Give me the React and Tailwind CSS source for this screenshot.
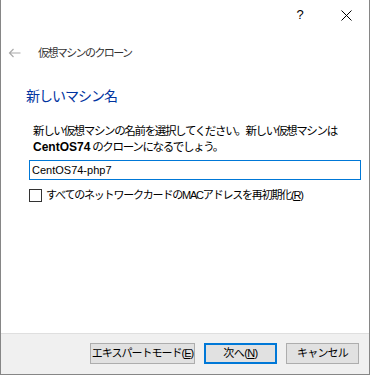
export default function App() {
  const font = { fontFamily: '"Liberation Sans","Noto Sans CJK JP",sans-serif' };
  return (
    <div
      className="w-[370px] h-[375px] bg-white border-l border-r border-b border-[#868686] flex flex-col text-black"
      style={font}
    >
      <div className="h-[30px] flex justify-end shrink-0">
        <div className="w-[46px] h-[30px] flex items-center justify-center text-[13px] text-black">?</div>
        <div className="w-[46px] h-[30px] flex items-center justify-center">
          <svg width="11" height="11" viewBox="0 0 11 11">
            <path d="M0.5 0.5 L10.5 10.5 M10.5 0.5 L0.5 10.5" stroke="#000" strokeWidth="1" />
          </svg>
        </div>
      </div>
      <div className="h-[30px] mt-[8px] flex items-center shrink-0">
        <div className="w-[37px] flex justify-center pr-[11px]">
          <svg width="13" height="10" viewBox="0 0 13 10">
            <path d="M12.5 5 H1.5 M5.5 1 L1.5 5 L5.5 9" stroke="#aaaaaa" strokeWidth="1.2" fill="none" />
          </svg>
        </div>
        <span className="text-[11px] tracking-[-1.6px] text-[#333]">仮想マシンのクローン</span>
      </div>
      <div className="mt-[18px] ml-[25px] h-[20px] leading-[20px] text-[14px] tracking-[-1px] text-[#0033a0] shrink-0">
        新しいマシン名
      </div>
      <div className="mt-[17px] ml-[32px] text-[11.5px] leading-[16px] tracking-[-1.35px] shrink-0 whitespace-nowrap">
        <div>新しい仮想マシンの名前を選択してください。新しい仮想マシンは</div>
        <div>
          <span className="font-bold tracking-[0px] text-[12px]">CentOS74</span> のクローンになるでしょう。
        </div>
      </div>
      <div className="mt-[5px] ml-[28px] w-[332px] h-[20px] border border-[#0078d7] flex items-center pl-[2px] text-[11px] shrink-0">
        CentOS74-php7
      </div>
      <div className="mt-[7px] ml-[28px] flex items-center shrink-0">
        <div className="w-[13px] h-[13px] border border-[#333] bg-white" />
        <span className="ml-[4px] text-[11px] tracking-[-1.2px] whitespace-nowrap">すべてのネットワークカードのMACアドレスを再初期化(<span className="underline">R</span>)</span>
      </div>
      <div className="flex-1" />
      <div className="h-[41px] bg-[#f0f0f0] border-t border-[#dfdfdf] flex justify-end items-start pt-[9px] pr-[10px] gap-[9px] shrink-0">
        <div className="w-[105px] h-[21px] bg-[#e1e1e1] border border-[#adadad] flex items-center justify-center text-[11px] tracking-[-1px] whitespace-nowrap">
          エキスパートモード(<span className="underline">E</span>)
        </div>
        <div className="w-[73px] h-[21px] bg-[#e1e1e1] border-2 border-[#0078d7] flex items-center justify-center text-[11px] tracking-[-0.6px] whitespace-nowrap">
          次へ(<span className="underline">N</span>)
        </div>
        <div className="w-[73px] h-[21px] bg-[#e1e1e1] border border-[#adadad] flex items-center justify-center text-[11px] tracking-[-0.8px] whitespace-nowrap">
          キャンセル
        </div>
      </div>
    </div>
  );
}
